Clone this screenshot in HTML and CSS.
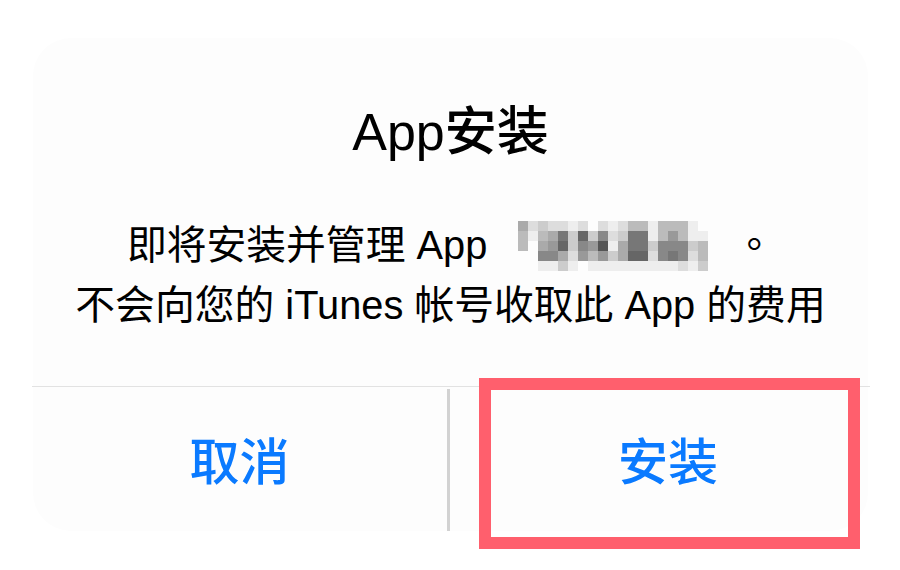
FILE: index.html
```html
<!DOCTYPE html>
<html lang="zh-CN">
<head>
<meta charset="utf-8">
<title>App安装</title>
<link rel="stylesheet" href="styles.css">
</head>
<body>
<div class="page">
  <div class="card">
    <h1 class="title">App安装</h1>
    <div class="message">
      <p class="line">即将安装并管理 App<span class="mosaic"><span class="mosaic-grid">
        <i class="s5"></i><i class="s2"></i><i class="s3"></i><i class="s2"></i><i class="s2"></i><i class="s1"></i><i class="s2"></i><i class="s0"></i><i class="s2"></i><i class="s1"></i><i class="s2"></i><i class="s4"></i><i class="s4"></i><i class="s1"></i><i class="s4"></i><i class="s4"></i><i class="s4"></i><i class="s1"></i><i class="s0"></i>
        <i class="s4"></i><i class="s1"></i><i class="s4"></i><i class="s5"></i><i class="s8"></i><i class="s3"></i><i class="s9"></i><i class="s3"></i><i class="s7"></i><i class="s2"></i><i class="s3"></i><i class="s8"></i><i class="s8"></i><i class="s1"></i><i class="s4"></i><i class="s6"></i><i class="s4"></i><i class="s1"></i><i class="s1"></i>
        <i class="s4"></i><i class="s0"></i><i class="s5"></i><i class="s6"></i><i class="s9"></i><i class="s3"></i><i class="s7"></i><i class="s6"></i><i class="sa"></i><i class="s1"></i><i class="s5"></i><i class="s8"></i><i class="s8"></i><i class="s3"></i><i class="s7"></i><i class="s7"></i><i class="s7"></i><i class="s3"></i><i class="s4"></i>
        <i class="s0"></i><i class="s0"></i><i class="s7"></i><i class="s7"></i><i class="s5"></i><i class="s2"></i><i class="s6"></i><i class="s4"></i><i class="s6"></i><i class="s3"></i><i class="s5"></i><i class="s9"></i><i class="s9"></i><i class="s2"></i><i class="s7"></i><i class="s8"></i><i class="s7"></i><i class="s2"></i><i class="s4"></i>
        <i class="s0"></i><i class="s0"></i><i class="s1"></i><i class="s1"></i><i class="s3"></i><i class="s1"></i><i class="s0"></i><i class="s1"></i><i class="s1"></i><i class="s1"></i><i class="s1"></i><i class="s1"></i><i class="s1"></i><i class="s1"></i><i class="s1"></i><i class="s1"></i><i class="s2"></i><i class="s1"></i><i class="s3"></i>
      </span></span><span class="stop">。</span></p>
      <p class="line">不会向您的 iTunes 帐号收取此 App 的费用</p>
    </div>
    <div class="actions">
      <div class="btn btn-cancel">取消</div>
      <div class="divider"></div>
      <div class="btn btn-install">安装</div>
    </div>
  </div>
  <div class="highlight"></div>
</div>
</body>
</html>
```

FILE: styles.css
```css
html, body {
  margin: 0;
  padding: 0;
  background: #ffffff;
}

.page {
  position: relative;
  width: 900px;
  height: 570px;
  overflow: hidden;
  padding-top: 38px;
  box-sizing: border-box;
  font-family: "Liberation Sans", "Noto Sans CJK SC", sans-serif;
  color: #000000;
}

.card {
  margin-left: 33px;
  width: 835px;
  height: 493px;
  border-radius: 38px;
  background: #fdfdfd;
  display: flex;
  flex-direction: column;
}

.title {
  margin: 0;
  padding-top: 64px;
  font-size: 52px;
  line-height: 60px;
  font-weight: 500;
  text-align: center;
}

.message {
  margin-top: 50px;
  text-align: center;
  font-size: 39.8px;
  line-height: 60px;
}

.line {
  margin: 0;
  height: 60px;
  white-space: nowrap;
}

.line + .line {
  margin-top: 3px;
}

.mosaic {
  display: inline-block;
  overflow: hidden;
  width: 190px;
  height: 50px;
  margin-left: 31px;
  margin-right: 26px;
  vertical-align: -12px;
  line-height: 0;
}

.mosaic-grid {
  display: grid;
  grid-template-columns: repeat(19, 10px);
  grid-auto-rows: 10px;
}

.mosaic i { display: block; }
.s0 { background: #fdfdfd; }
.s1 { background: #eeeeee; }
.s2 { background: #dddddd; }
.s3 { background: #cccccc; }
.s4 { background: #bbbbbb; }
.s5 { background: #aaaaaa; }
.s6 { background: #999999; }
.s7 { background: #888888; }
.s8 { background: #777777; }
.s9 { background: #666666; }
.sa { background: #555555; }

.stop {
  font-family: "Noto Sans CJK TC", sans-serif;
}

.actions {
  margin-top: auto;
  height: 144px;
  border-top: 1px solid #e2e2e2;
  display: flex;
  align-items: stretch;
  margin-left: -1px;
  margin-right: -2px;
}

.btn {
  display: flex;
  align-items: center;
  justify-content: center;
  font-size: 50px;
  font-weight: 500;
  color: #0a7aff;
  padding-bottom: 2px;
}

.btn-cancel {
  width: 415px;
}

.divider {
  width: 3px;
  margin-top: 2px;
  background: #d2d2d2;
}

.btn-install {
  flex: 1;
  padding-left: 16px;
}

.highlight {
  position: absolute;
  left: 479px;
  top: 378px;
  width: 381px;
  height: 171px;
  box-sizing: border-box;
  border: 12px solid #ff5f6d;
}
```
